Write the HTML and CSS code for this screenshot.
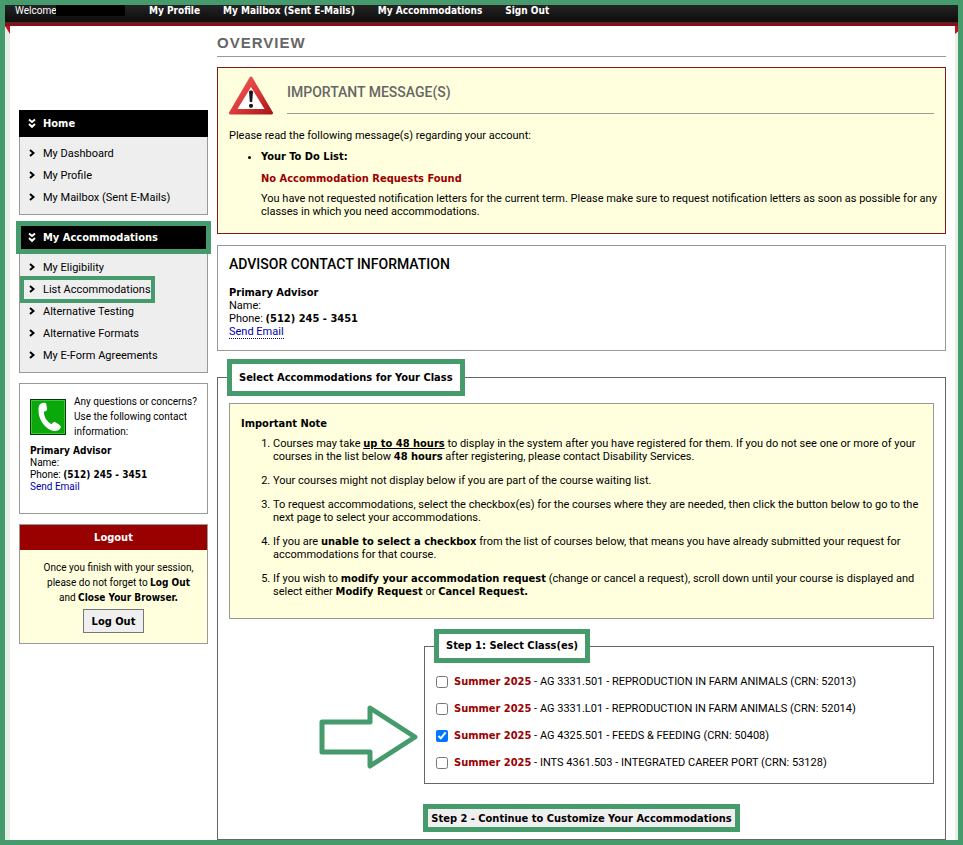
FILE: index.html
```html
<!DOCTYPE html>
<html lang="en">
<head>
<meta charset="utf-8">
<title>Overview</title>
<link rel="stylesheet" href="styles.css">
</head>
<body>
<div class="frame">
  <header class="topbar">
    <span class="welcome">Welcome <span class="redacted"></span></span>
    <nav class="topnav">
      <a href="#">My Profile</a>
      <a href="#">My Mailbox (Sent E-Mails)</a>
      <a href="#">My Accommodations</a>
      <a href="#">Sign Out</a>
    </nav>
  </header>
  <div class="page">
    <aside class="sidebar">
      <section class="menu">
        <h2 class="menu-title"><svg class="chev" viewBox="0 0 8 11"><path d="M1 1.500l3 2.500 3-2.500M1 6l3 2.800L7 6"/></svg>Home</h2>
        <ul class="menu-list">
          <li><a href="#"><svg class="arrow" viewBox="0 0 6 8"><path d="M1 1l3.500 3L1 7"/></svg>My Dashboard</a></li>
          <li><a href="#"><svg class="arrow" viewBox="0 0 6 8"><path d="M1 1l3.500 3L1 7"/></svg>My Profile</a></li>
          <li><a href="#"><svg class="arrow" viewBox="0 0 6 8"><path d="M1 1l3.500 3L1 7"/></svg>My Mailbox (Sent E-Mails)</a></li>
        </ul>
      </section>
      <section class="menu">
        <h2 class="menu-title marked"><svg class="chev" viewBox="0 0 8 11"><path d="M1 1.500l3 2.500 3-2.500M1 6l3 2.800L7 6"/></svg>My Accommodations</h2>
        <ul class="menu-list">
          <li><a href="#"><svg class="arrow" viewBox="0 0 6 8"><path d="M1 1l3.500 3L1 7"/></svg>My Eligibility</a></li>
          <li><a href="#" class="marked-link"><svg class="arrow" viewBox="0 0 6 8"><path d="M1 1l3.500 3L1 7"/></svg>List Accommodations</a></li>
          <li><a href="#"><svg class="arrow" viewBox="0 0 6 8"><path d="M1 1l3.500 3L1 7"/></svg>Alternative Testing</a></li>
          <li><a href="#"><svg class="arrow" viewBox="0 0 6 8"><path d="M1 1l3.500 3L1 7"/></svg>Alternative Formats</a></li>
          <li><a href="#"><svg class="arrow" viewBox="0 0 6 8"><path d="M1 1l3.500 3L1 7"/></svg>My E-Form Agreements</a></li>
        </ul>
      </section>
      <section class="contact">
        <div class="contact-head">
          <svg class="phone" viewBox="0 0 36 36"><rect x=".5" y=".5" width="35" height="35" fill="#0aa80a" stroke="#063806"/><rect x="1.500" y="1.500" width="33" height="33" fill="none" stroke="#3cc83c"/><path fill="#fff" d="M11 4.500c2-1.200 4.600-1 5.200.3l.9 5.200c0 1.600-1 2.300-3.100 2.600-.3 5 3 10.600 7.800 12.600.9-1.800 2.200-2.600 3.700-1.900l4.500 2.900c1.500 1.200.7 3.500-1.300 4.700-3.600 2.200-8.500 1-12.700-3C11 23.500 8 16.500 8.500 9.500c.2-2.700 1-4.200 2.500-5z"/></svg>
          <p>Any questions or concerns? Use the following contact information:</p>
        </div>
        <address class="advisor small">
          <strong>Primary Advisor</strong><br>Name:<br>Phone: <strong>(512) 245 - 3451</strong><br><a href="#">Send Email</a>
        </address>
      </section>
      <section class="logout">
        <h2>Logout</h2>
        <div class="logout-body">
          <p>Once you finish with your session, please do not forget to <strong>Log Out</strong> and <strong>Close Your Browser.</strong></p>
          <button type="button">Log Out</button>
        </div>
      </section>
    </aside>
    <main class="main">
      <h1>OVERVIEW</h1>
      <section class="message">
        <div class="message-head">
          <svg class="warning" viewBox="0 0 46 40"><defs><linearGradient id="red" x1="0" y1="0" x2="1" y2="1"><stop offset="0" stop-color="#f0605c"/><stop offset=".5" stop-color="#dc3c3c"/><stop offset="1" stop-color="#a81818"/></linearGradient></defs><path d="M22 2L42.500 37h-41z" fill="url(#red)" stroke="url(#red)" stroke-width="3" stroke-linejoin="round"/><path d="M22 11L35.500 33h-27z" fill="#fff"/><path d="M20 15.500c0-1.500 4-1.500 4 0l-.8 10.500h-2.400z" fill="#181818"/><circle cx="22" cy="29.800" r="2.100" fill="#181818"/></svg>
          <h2>IMPORTANT MESSAGE(S)</h2>
        </div>
        <p>Please read the following message(s) regarding your account:</p>
        <ul class="todo">
          <li><strong>Your To Do List:</strong>
            <h3>No Accommodation Requests Found</h3>
            <p>You have not requested notification letters for the current term. Please make sure to request notification letters as soon as possible for any classes in which you need accommodations.</p>
          </li>
        </ul>
      </section>
      <section class="advisor-box">
        <h2>ADVISOR CONTACT INFORMATION</h2>
        <address class="advisor">
          <strong>Primary Advisor</strong><br>Name:<br>Phone: <strong>(512) 245 - 3451</strong><br><a href="#">Send Email</a>
        </address>
      </section>
      <form>
        <fieldset class="select-group">
          <legend>Select Accommodations for Your Class</legend>
          <section class="note">
            <h3>Important Note</h3>
            <ol>
              <li>Courses may take <strong><u>up to 48 hours</u></strong> to display in the system after you have registered for them. If you do not see one or more of your courses in the list below <strong>48 hours</strong> after registering, please contact Disability Services.</li>
              <li>Your courses might not display below if you are part of the course waiting list.</li>
              <li>To request accommodations, select the checkbox(es) for the courses where they are needed, then click the button below to go to the next page to select your accommodations.</li>
              <li>If you are <strong>unable to select a checkbox</strong> from the list of courses below, that means you have already submitted your request for accommodations for that course.</li>
              <li>If you wish to <strong>modify your accommodation request</strong> (change or cancel a request), scroll down until your course is displayed and select either <strong>Modify Request</strong> or <strong>Cancel Request.</strong></li>
            </ol>
          </section>
          <div class="step">
            <svg class="pointer" viewBox="0 0 100 66"><path d="M3 18h48V4l45 29-45 29V48H3z"/></svg>
            <fieldset class="classes">
              <legend>Step 1: Select Class(es)</legend>
              <label><input type="checkbox"><span><strong>Summer 2025</strong> - AG 3331.501 - REPRODUCTION IN FARM ANIMALS (CRN: 52013)</span></label>
              <label><input type="checkbox"><span><strong>Summer 2025</strong> - AG 3331.L01 - REPRODUCTION IN FARM ANIMALS (CRN: 52014)</span></label>
              <label><input type="checkbox" checked><span><strong>Summer 2025</strong> - AG 4325.501 - FEEDS &amp; FEEDING (CRN: 50408)</span></label>
              <label><input type="checkbox"><span><strong>Summer 2025</strong> - INTS 4361.503 - INTEGRATED CAREER PORT (CRN: 53128)</span></label>
            </fieldset>
          </div>
          <button type="button" class="continue">Step 2 - Continue to Customize Your Accommodations</button>
        </fieldset>
      </form>
    </main>
  </div>
</div>
</body>
</html>
```
FILE: styles.css
```css
:root {
  --green: #469b6c;
  --cream: #ffffdd;
  --maroon: #990000;
  --line: #999;
  --text: Roboto, sans-serif;
  --bold: "DejaVu Sans Condensed", sans-serif;
}

* { box-sizing: border-box; }

body {
  margin: 0;
  background: #fff;
  color: #000;
  font: 11px/13px var(--text);
}

h1, h2, h3, p, ul, ol { margin: 0; }
h2, h3, strong, legend, button { font-family: var(--bold); }
a { color: inherit; text-decoration: none; }
svg { flex: none; }
address { font-style: normal; }

.frame {
  min-height: 100vh;
  display: flex;
  flex-direction: column;
  border: 5px solid var(--green);
}

.topbar {
  height: 21px;
  display: flex;
  align-items: flex-start;
  padding-left: 10px;
  line-height: 12px;
  color: #fff;
  background: linear-gradient(#242424, #101010 14px, #1c0a08 17px, #5a1e20 17px, #6a2024 19px, #8a0c18 19px);
}
.welcome { display: flex; width: 134px; font-size: 10px; }
.redacted { width: 69px; height: 11px; background: #000; }
.topnav { display: flex; gap: 23px; font-family: var(--bold); font-size: 10px; font-weight: bold; }

.page {
  flex: 1;
  position: relative;
  display: flex;
  gap: 9px;
  padding: 0 9px;
  border: solid #e6f0e8;
  border-width: 0 3px 0 5px;
}
.page::before, .page::after {
  content: "";
  position: absolute;
  top: 0;
  width: 5px;
  height: 8px;
  background: #c01020;
}
.page::before { left: -5px; clip-path: polygon(0 0, 100% 0, 100% 100%); }
.page::after { right: -3px; width: 3px; clip-path: polygon(0 0, 100% 0, 100% 70%, 0 100%); }

.sidebar { flex: none; width: 189px; padding-top: 84px; }
.menu { margin-bottom: 9px; }
.menu-title {
  display: flex;
  align-items: center;
  gap: 7px;
  height: 27px;
  padding-left: 9px;
  font-size: 11px;
  color: #fff;
  background: #000;
}
.chev { width: 8px; height: 11px; fill: none; stroke: #fff; stroke-width: 2; }
.marked { outline: 5px solid var(--green); outline-offset: -2px; }
.menu-list {
  padding: 5px 0 6px 4px;
  list-style: none;
  background: #eee;
  border: 1px solid var(--line);
  border-top: 0;
}
.menu-list li { display: flex; align-items: center; height: 22px; }
.menu-list a { display: flex; align-items: center; gap: 8px; height: 19px; padding-left: 5px; }
.arrow { width: 6px; height: 8px; fill: none; stroke: #000; stroke-width: 2; }
.marked-link { outline: 4px solid var(--green); }

.contact { margin-top: 10px; padding: 10px 10px 20px; border: 1px solid var(--line); font-size: 10px; }
.contact-head { display: flex; gap: 8px; line-height: 15px; }
.phone { width: 36px; height: 36px; margin-top: 5px; }
.advisor.small { margin-top: 6px; line-height: 12px; }
.small a { color: #00a; }

.logout { margin-top: 10px; border: 1px solid var(--line); background: var(--cream); text-align: center; }
.logout h2 { font-size: 11px; line-height: 25px; color: #fff; background: var(--maroon); }
.logout-body { padding: 10px 10px 10px 20px; font-size: 10px; line-height: 15px; }
.logout button {
  height: 24px;
  margin: 4px 10px 0 0;
  padding: 0 8px;
  border: 1px solid #767676;
  background: #efefef;
  font: bold 11px var(--bold);
}

.main { flex: 1; min-width: 0; }
h1 {
  padding: 8px 0 4px;
  margin-bottom: 10px;
  border-bottom: 1px solid var(--line);
  font: bold 15px/18px "Liberation Sans", sans-serif;
  letter-spacing: 1px;
  color: #666;
}
.message { padding: 7px 11px 15px; border: 1px solid #7a1a1a; background: var(--cream); }
.message-head { display: flex; gap: 12px; margin-bottom: 12px; }
.warning { width: 46px; height: 42px; }
.message-head h2 {
  flex: 1;
  height: 39px;
  padding-top: 8px;
  border-bottom: 1px solid var(--line);
  font: 500 14px/18px Roboto, sans-serif;
  color: #666;
}
.todo { margin: 8px -8px 0 0; padding-left: 32px; }
.todo h3 { margin: 9px 0 7px; font-size: 11px; color: var(--maroon); }

.advisor-box { margin: 11px 0 8px; padding: 9px 11px 12px; border: 1px solid var(--line); }
.advisor-box h2 { margin-bottom: 13px; font: 500 14px/18px Roboto, sans-serif; }
.advisor a { color: #00a; }
.advisor-box a { border-bottom: 1px dotted #006; }

form { margin: 0; }
fieldset { min-width: 0; margin: 0; border: 1px solid #666; }
legend { padding: 7px; border: 5px solid var(--green); background: #fff; font-weight: bold; }
.select-group { padding: 7px 11px; }
.select-group > legend { margin-left: -2px; }
.note { padding: 13px 11px 20px; border: 1px solid var(--line); background: var(--cream); }
.note h3 { margin-bottom: 7px; font-size: 11px; }
.note ol { display: grid; gap: 11px; padding-left: 32px; }
.step { display: flex; align-items: center; gap: 5px; margin-top: 10px; padding-left: 90px; }
.pointer { width: 100px; height: 66px; margin-top: 60px; fill: none; stroke: var(--green); stroke-width: 5; stroke-linejoin: round; }
.classes { flex: 1; padding: 5px 11px 7px; }
.classes legend { margin-left: -2px; padding: 5px 7px 6px; }
.classes label { display: flex; align-items: center; gap: 6px; height: 27px; }
.classes input { width: 12px; height: 12px; margin: 0; }
.classes strong { color: var(--maroon); }
.continue {
  display: block;
  height: 28px;
  margin: 20px auto 0;
  padding: 0 3px;
  border: 5px solid var(--green);
  background: #efefef;
  font: bold 11px/13px var(--bold);
}
```
